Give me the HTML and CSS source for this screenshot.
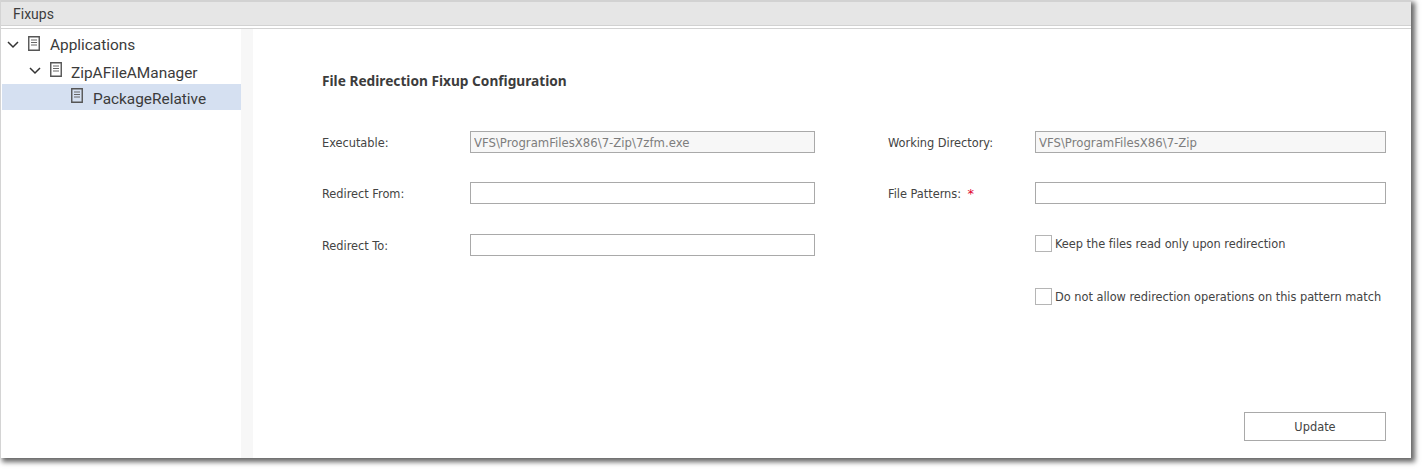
FILE: index.html
```html
<!DOCTYPE html>
<html lang="en">
<head>
<meta charset="utf-8">
<title>Fixups</title>
<link rel="stylesheet" href="styles.css">
</head>
<body>
<div class="window">
  <header class="titlebar">Fixups</header>
  <div class="main">
    <nav class="tree">
      <div class="node lvl0">
        <svg class="chev" viewBox="0 0 12 8"><path d="M1 1l5 5 5-5"/></svg>
        <svg class="doc" viewBox="0 0 12 15"><path class="o" d="M.75.75h10.5v13.5H.75z"/><path class="l" d="M3 4h6M3 6.5h6M3 9h6"/></svg>
        <span>Applications</span>
      </div>
      <div class="node lvl1">
        <svg class="chev" viewBox="0 0 12 8"><path d="M1 1l5 5 5-5"/></svg>
        <svg class="doc" viewBox="0 0 12 15"><path class="o" d="M.75.75h10.5v13.5H.75z"/><path class="l" d="M3 4h6M3 6.5h6M3 9h6"/></svg>
        <span>ZipAFileAManager</span>
      </div>
      <div class="node lvl2 selected">
        <svg class="doc" viewBox="0 0 12 15"><path class="o" d="M.75.75h10.5v13.5H.75z"/><path class="l" d="M3 4h6M3 6.5h6M3 9h6"/></svg>
        <span>PackageRelative</span>
      </div>
    </nav>
    <div class="splitter"></div>
    <section class="content">
      <h1 class="heading">File Redirection Fixup Configuration</h1>
      <div class="form">
        <label class="lbl">Executable:</label>
        <input class="field ro" value="VFS\ProgramFilesX86\7-Zip\7zfm.exe" readonly>
        <span></span>
        <label class="lbl">Working Directory:</label>
        <input class="field ro" value="VFS\ProgramFilesX86\7-Zip" readonly>

        <label class="lbl">Redirect From:</label>
        <input class="field">
        <span></span>
        <label class="lbl">File Patterns: <b class="req">*</b></label>
        <input class="field">

        <label class="lbl">Redirect To:</label>
        <input class="field">
        <span></span>
        <span></span>
        <div class="check"><i class="box"></i><span>Keep the files read only upon redirection</span></div>

        <span></span><span></span><span></span><span></span>
        <div class="check"><i class="box"></i><span>Do not allow redirection operations on this pattern match</span></div>
      </div>
      <div class="actions"><button class="btn">Update</button></div>
    </section>
  </div>
</div>
</body>
</html>
```
FILE: styles.css
```css
* { box-sizing: border-box; }
html, body { margin: 0; padding: 0; background: #fff; }
body { width: 1426px; height: 473px; overflow: hidden; font-family: "DejaVu Sans", sans-serif; }
.window {
  width: 1411px; height: 458px; background: #fff;
  display: flex; flex-direction: column;
  border-left: 1px solid #d4d4d4;
  box-shadow: 3px 3px 5px 1px rgba(0,0,0,.6);
}
.titlebar {
  height: 29px; padding: 0 0 3px 12px; background: #e6e6e6;
  border-top: 2px solid #d2d2d2;
  border-bottom: 1px solid #d2d2d2;
  box-shadow: inset 0 -2px 0 #fff, inset 0 -3px 0 #d2d2d2;
  font: 14px/24px "Roboto", sans-serif; color: #3d3d3d;
}
.main { flex: 1; display: flex; min-height: 0; }
.tree { width: 240px; padding: 3px 0 0 1px; font: 15.4px/26px "Roboto", sans-serif; color: #3b3b3b; }
.node { height: 26px; display: flex; align-items: center; white-space: nowrap; }
.lvl0 { padding-left: 5px; }
.lvl1 { padding-left: 27px; }
.lvl1 span { margin-left: -1px; padding-top: 4px; }
.lvl2 { padding-left: 69px; }
.lvl2 span { padding-top: 4px; }
.selected { background: #d5e0f1; }
.chev { width: 12px; height: 8px; fill: none; stroke: #333; stroke-width: 1.5; margin-right: 9px; }
.doc { width: 12px; height: 15px; margin-right: 10px; margin-top: -4px; }
.doc .o { fill: none; stroke: #555; stroke-width: 1.4; }
.doc .l { fill: none; stroke: #666; stroke-width: 1; }
.splitter { width: 12px; background: #f7f7f7; }
.content { flex: 1; padding: 41px 25px 17px 69px; display: flex; flex-direction: column; }
.heading { margin: 0 0 39px; font: bold 13.7px/22px "Noto Sans", sans-serif; color: #3c3c3c; }
.form {
  display: grid;
  grid-template-columns: 148px 345px 73px 147px 351px;
  grid-template-rows: 51px 52px 53px 22px;
  align-items: start;
  font: 11.4px/22px "DejaVu Sans", sans-serif; letter-spacing: -.03px; color: #444;
}
.lbl { white-space: nowrap; padding-top: 1px; }
.req { color: #e0002b; font-weight: normal; font-size: 13px; margin-left: 3px; }
.field { width: 100%; height: 22px; border: 1px solid #a9a9a9; background: #fff; padding: 2px 3px 0; font: 11.7px "DejaVu Sans", sans-serif; color: #444; outline: none; }
.ro { background: #f7f7f7; color: #7d7d7d; }
.check { display: flex; align-items: flex-start; gap: 3px; white-space: nowrap; height: 19px; line-height: 19px; }
.check span { padding-top: 1px; }
.box { width: 17px; height: 17px; border: 1px solid #b5b5b5; background: #fff; flex: none; margin-top: 1px; }
.actions { margin-top: auto; display: flex; justify-content: flex-end; }
.btn { width: 142px; height: 29px; background: #fff; border: 1px solid #a9a9a9; font: 11.4px "DejaVu Sans", sans-serif; color: #444; padding: 0; }
```
